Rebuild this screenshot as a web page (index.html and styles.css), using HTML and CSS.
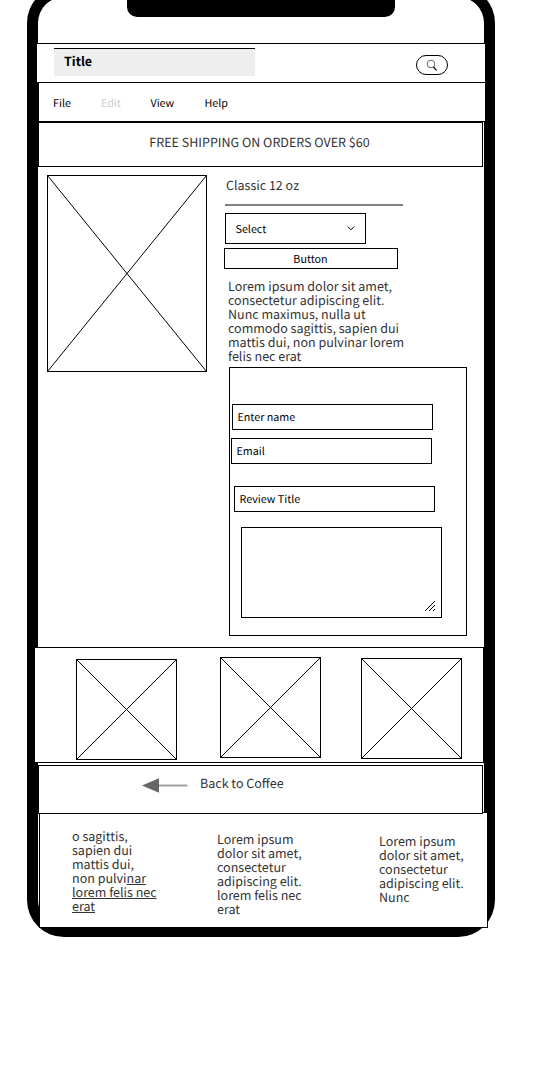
FILE: index.html
```html
<!DOCTYPE html>
<html lang="en">
<head>
<meta charset="utf-8">
<title>Classic 12 oz</title>
<link rel="stylesheet" href="styles.css">
</head>
<body>
<div class="phone">
  <div class="notch"></div>
  <header class="header">
    <h1 class="title">Title</h1>
    <button class="search" aria-label="Search">
      <svg width="12" height="12" viewBox="0 0 12 12" fill="none" stroke="#000"><circle cx="5" cy="5" r="3.8" stroke-width=".6"/><path d="M7.5 8 10.6 11.3" stroke-width="1.2"/></svg>
    </button>
  </header>
  <nav class="menu"><a class="file">File</a><a class="edit">Edit</a><a class="view">View</a><a>Help</a></nav>
  <div class="banner">FREE SHIPPING ON ORDERS OVER $60</div>
  <main class="product">
    <svg class="photo" width="160" height="197" fill="none" stroke="#000"><rect x=".5" y=".5" width="159" height="196"/><path d="M.5.5 159.5 196.5M159.5.5.5 196.5"/></svg>
    <div class="details">
      <h2 class="name">Classic 12 oz</h2>
      <div class="select"><span>Select</span><svg width="8" height="6" viewBox="0 0 8 6" fill="none" stroke="#000"><path d="M.8 .5 4 3.8 7.2 .5"/></svg></div>
      <button class="button">Button</button>
      <p class="copy">Lorem ipsum dolor sit amet,<br>consectetur adipiscing elit.<br>Nunc maximus, nulla ut<br>commodo sagittis, sapien dui<br>mattis dui, non pulvinar lorem<br>felis nec erat</p>
      <form class="review">
        <div class="field field-name">Enter name</div>
        <div class="field field-email">Email</div>
        <div class="field field-title">Review Title</div>
        <div class="message"><svg width="10" height="10" viewBox="0 0 10 10" stroke="#000"><path d="M0 10 10 0M4 10 10 4M8 10 10 8"/></svg></div>
      </form>
    </div>
  </main>
  <section class="gallery">
    <svg class="thumb low" width="101" height="101" shape-rendering="crispEdges" fill="none" stroke="#000"><path d="M.5.5h100v100H.5zL100.5 100.5M100.5.5.5 100.5"/></svg>
    <svg class="thumb" width="101" height="101" shape-rendering="crispEdges" fill="none" stroke="#000"><path d="M.5.5h100v100H.5zL100.5 100.5M100.5.5.5 100.5"/></svg>
    <svg class="thumb mid" width="101" height="101" shape-rendering="crispEdges" fill="none" stroke="#000"><path d="M.5.5h100v100H.5zL100.5 100.5M100.5.5.5 100.5"/></svg>
  </section>
  <div class="back">
    <svg class="arrow" width="46" height="16" viewBox="0 0 46 16"><path d="M16 7.5H45.5" stroke="#a0a0a0" stroke-width="2"/><path d="M0 7.5 17 .3V14.7z" fill="#666"/></svg>
    <a>Back to Coffee</a>
  </div>
  <footer class="footer">
    <p class="col first">o sagittis,<br>sapien dui<br>mattis dui,<br>non pulvi<u>nar<br>lorem felis nec<br>erat</u></p>
    <p class="col second">Lorem ipsum<br>dolor sit amet,<br>consectetur<br>adipiscing elit.<br>lorem felis nec<br>erat</p>
    <p class="col third">Lorem ipsum<br>dolor sit amet,<br>consectetur<br>adipiscing elit.<br>Nunc</p>
  </footer>
</div>
</body>
</html>
```

FILE: styles.css
```css
* { box-sizing: border-box; }
html { overflow: hidden; background: #fff; }
body {
  margin: 0;
  height: 1078px;
  display: flow-root;
  overflow: hidden;
  font: 10.74px/14px "Noto Sans CJK SC", "Open Sans", sans-serif;
  text-rendering: geometricPrecision;
  color: #000;
}
h1, h2, p { margin: 0; font-weight: 400; }
svg { display: block; flex: none; }
.phone {
  width: 468px;
  height: 951px;
  margin: -14px 0 0 27px;
  border: 11px solid #000;
  border-bottom-width: 10px;
  border-radius: 37px;
}
.notch {
  width: 268px;
  height: 20px;
  margin: 0 0 26px 89px;
  background: #000;
  border-radius: 0 0 10px 10px;
}
.header {
  width: 448px;
  height: 40px;
  margin-left: -1px;
  padding: 4px 37px 0 17px;
  display: flex;
  justify-content: space-between;
  background: #fff;
  border: solid #000;
  border-width: 1px 0;
}
.title {
  width: 201px;
  height: 28px;
  padding: 5px 10px;
  background: #eee;
  border-top: 1px solid #000;
  font-size: 12.53px;
  font-weight: 700;
}
.search {
  width: 32px;
  height: 20px;
  margin-top: 7px;
  padding: 0;
  display: grid;
  place-items: center;
  background: #fff;
  border: 1px solid #000;
  border-radius: 10px;
}
.menu {
  width: 447px;
  height: 39px;
  padding: 14px 14px 0;
  display: flex;
  background: #fff;
  border: solid #000;
  border-width: 0 0 1px 1px;
}
.file { width: 48px; }
.edit { width: 49.5px; color: #ccc; }
.view { width: 54px; }
.banner, .back {
  width: 445px;
  background: #fff;
  border: 1px solid #000;
  font-size: 12.53px;
  color: #333;
}
.banner {
  height: 45px;
  padding: 12px 2px 0 0;
  text-align: center;
}
.product {
  height: 480px;
  padding: 8px 0 0 9px;
  display: flex;
  align-items: flex-start;
  gap: 18px;
}
.details { width: 242px; }
.name {
  width: 178px;
  height: 31px;
  margin-bottom: 7px;
  padding: 3px 1px;
  border-bottom: 2px solid #808080;
  font-size: 12.53px;
  color: #333;
}
.select {
  width: 141px;
  height: 31px;
  margin-bottom: 4px;
  padding: 0 10px 0 9.5px;
  display: flex;
  align-items: center;
  justify-content: space-between;
  border: 1px solid #000;
}
.select span { padding-top: 2px; }
.button {
  display: block;
  width: 174px;
  height: 21px;
  margin: 0 0 10px -1px;
  padding: 0 1px 0 0;
  background: #fff;
  border: 1px solid #000;
  font: inherit;
  color: #000;
}
.copy, .col { font-size: 12.53px; color: #333; }
.copy { margin-left: 3px; }
.review {
  width: 238px;
  height: 269px;
  margin: 4px 0 0 4px;
  padding: 36px 0 0 1px;
  border: 1px solid #000;
}
.field {
  width: 201px;
  height: 26px;
  padding: 6px 4.5px 0;
  border: 1px solid #000;
}
.field-name { margin: 0 0 8px 1px; }
.field-email { margin-bottom: 22px; }
.field-title { margin: 0 0 15px 3px; }
.message {
  width: 201px;
  height: 91px;
  margin-left: 10px;
  padding: 6px;
  display: flex;
  align-items: flex-end;
  justify-content: flex-end;
  border: 1px solid #000;
}
.gallery {
  width: 450px;
  height: 116px;
  margin: 0 0 2px -4px;
  padding: 9px 0 0 41px;
  display: flex;
  background: #fff;
  border: 1px solid #000;
}
.low { margin: 2px 43px 0 0; }
.mid { margin: 1px 0 0 40px; }
.back {
  position: relative;
  z-index: 1;
  height: 49px;
  padding: 10px 0 0 103px;
  display: flex;
  gap: 12px;
}
.arrow { margin-top: 2px; }
.footer {
  width: 449px;
  height: 116px;
  margin: -2px 0 0 1px;
  padding: 16px 0 0 32px;
  display: flex;
  background: #fff;
  border: 1px solid #000;
}
.first { width: 145px; }
.second { width: 162px; margin-top: 3px; }
.third { margin-top: 5px; }
```
